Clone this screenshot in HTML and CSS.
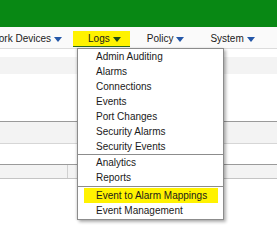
FILE: index.html
```html
<!DOCTYPE html>
<html lang="en">
  <head>
    <meta charset="UTF-8" />
    <meta name="viewport" content="width=device-width, initial-scale=1.0" />
    <title>Logs Menu</title>
    <link rel="stylesheet" href="styles.css">
  </head>
  <body>
    <div class="topbar"></div>

    <div class="nav">
      <div class="nav-item first">Network Devices<span class="caret"></span></div>
      <div class="nav-item active">Logs<span class="caret"></span></div>
      <div class="nav-item">Policy<span class="caret"></span></div>
      <div class="nav-item">System<span class="caret"></span></div>
    </div>

    <div class="page">
      <div class="gap"></div>
      <div class="band"></div>
      <div class="blank"></div>
      <div class="header-row"></div>
      <div class="blank short"></div>
      <div class="toolbar">
        <div class="tool-cell"></div>
        <div class="tool-rest"></div>
      </div>
    </div>

    <div class="dropdown">
      <div class="menu-item">Admin Auditing</div>
      <div class="menu-item">Alarms</div>
      <div class="menu-item">Connections</div>
      <div class="menu-item">Events</div>
      <div class="menu-item">Port Changes</div>
      <div class="menu-item">Security Alarms</div>
      <div class="menu-item">Security Events</div>
      <div class="separator"></div>
      <div class="menu-item">Analytics</div>
      <div class="menu-item">Reports</div>
      <div class="separator spaced"></div>
      <div class="menu-item selected">Event to Alarm Mappings</div>
      <div class="menu-item">Event Management</div>
    </div>
  </body>
</html>
```

FILE: styles.css
```css
body {
  margin: 0;
  font-family: "Liberation Sans", Arial, sans-serif;
  font-size: 10px;
  color: #1a1a1a;
  background-color: white;
  overflow: hidden;
}
.topbar {
  height: 27px;
  background-color: #088814;
}
.nav {
  display: flex;
  height: 17px;
  padding-top: 4px;
  background-color: #fafafa;
  border-bottom: 1px solid #dcdcdc;
  white-space: nowrap;
}
.nav-item {
  display: flex;
  align-items: center;
  height: 15px;
  padding: 0 9px 0 15px;
  margin-right: 2px;
  border-bottom: 1px solid transparent;
}
.nav-item.first {
  margin-left: -39px;
}
.nav-item.active {
  background-color: #fff200;
  border-bottom-color: #2c6a1c;
}
.caret {
  display: inline-block;
  width: 0;
  height: 0;
  margin-left: 3px;
  margin-top: 1px;
  border-left: 4px solid transparent;
  border-right: 4px solid transparent;
  border-top: 5px solid #2457a8;
}
.active .caret {
  border-top-color: #1f4a16;
}
.gap {
  height: 8px;
}
.band {
  height: 17px;
  background-color: #f3f3f3;
}
.blank {
  height: 47px;
  border-bottom: 1px solid #9a9a9a;
}
.blank.short {
  height: 20px;
}
.header-row {
  height: 21px;
  background-color: #f3f3f3;
  border-bottom: 1px solid #d6d6d6;
}
.toolbar {
  display: flex;
  height: 13px;
  background-color: #f3f3f3;
  border-bottom: 1px solid #c4c4c4;
}
.tool-cell {
  width: 67px;
  border-right: 1px solid #d0d0d0;
}
.tool-rest {
  flex: 1;
}
.dropdown {
  position: absolute;
  left: 77px;
  top: 48px;
  width: 145px;
  padding-bottom: 1px;
  background-color: white;
  border: 1px solid #8c8c8c;
  box-shadow: 2px 2px 3px rgba(0, 0, 0, 0.3), -1px 0 2px rgba(0, 0, 0, 0.12);
}
.menu-item {
  height: 15px;
  line-height: 15px;
  padding-left: 18px;
  white-space: nowrap;
}
.menu-item.selected {
  margin: 0 5px 0 6px;
  padding-left: 12px;
  background-color: #fff200;
}
.separator {
  height: 1px;
  background-color: #8c8c8c;
}
.separator.spaced {
  margin: 1px 0;
}
```
